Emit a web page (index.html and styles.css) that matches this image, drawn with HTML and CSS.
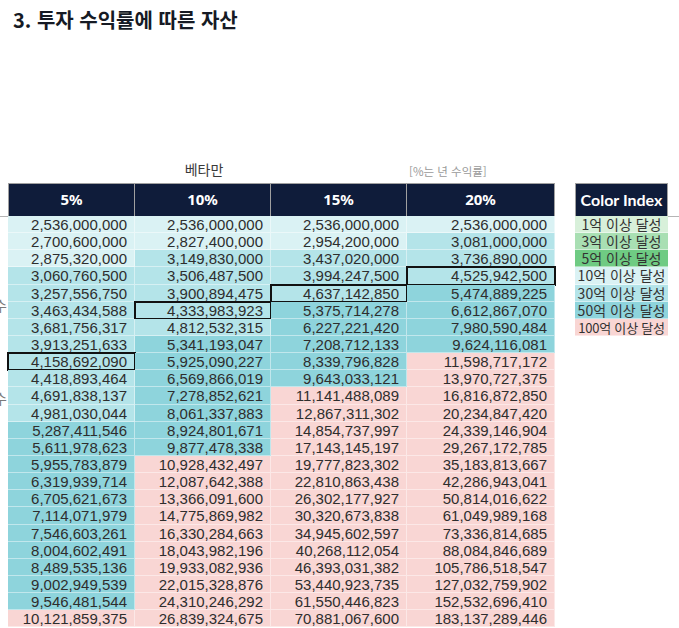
FILE: index.html
```html
<!DOCTYPE html>
<html lang="ko">
<head>
<meta charset="utf-8">
<title>투자 수익률에 따른 자산</title>
<link rel="stylesheet" href="styles.css">
</head>
<body>
<h1 class="title">3. 투자 수익률에 따른 자산</h1>

<div class="captions">
  <span></span>
  <span></span>
  <span class="cap-main">베타만</span>
  <span></span>
  <span class="cap-note">[%는 년 수익률]</span>
</div>

<div class="board">
  <div class="gutter">
    <span class="stub">수</span>
    <span class="stub stub-2">수</span>
  </div>

  <div class="grid">
    <div class="th">5%</div><div class="th">10%</div><div class="th">15%</div><div class="th">20%</div>

    <div class="td c1">2,536,000,000</div><div class="td c1">2,536,000,000</div><div class="td c1">2,536,000,000</div><div class="td c1">2,536,000,000</div>
    <div class="td c1">2,700,600,000</div><div class="td c1">2,827,400,000</div><div class="td c1">2,954,200,000</div><div class="td c2">3,081,000,000</div>
    <div class="td c1">2,875,320,000</div><div class="td c2">3,149,830,000</div><div class="td c2">3,437,020,000</div><div class="td c2">3,736,890,000</div>
    <div class="td c2">3,060,760,500</div><div class="td c2">3,506,487,500</div><div class="td c2">3,994,247,500</div><div class="td c2 hit">4,525,942,500</div>
    <div class="td c2">3,257,556,750</div><div class="td c2">3,900,894,475</div><div class="td c2 hit">4,637,142,850</div><div class="td c3">5,474,889,225</div>
    <div class="td c2">3,463,434,588</div><div class="td c2 hit">4,333,983,923</div><div class="td c3">5,375,714,278</div><div class="td c3">6,612,867,070</div>
    <div class="td c2">3,681,756,317</div><div class="td c2">4,812,532,315</div><div class="td c3">6,227,221,420</div><div class="td c3">7,980,590,484</div>
    <div class="td c2">3,913,251,633</div><div class="td c3">5,341,193,047</div><div class="td c3">7,208,712,133</div><div class="td c3">9,624,116,081</div>
    <div class="td c2 hit">4,158,692,090</div><div class="td c3">5,925,090,227</div><div class="td c3">8,339,796,828</div><div class="td c4">11,598,717,172</div>
    <div class="td c2">4,418,893,464</div><div class="td c3">6,569,866,019</div><div class="td c3">9,643,033,121</div><div class="td c4">13,970,727,375</div>
    <div class="td c2">4,691,838,137</div><div class="td c3">7,278,852,621</div><div class="td c4">11,141,488,089</div><div class="td c4">16,816,872,850</div>
    <div class="td c2">4,981,030,044</div><div class="td c3">8,061,337,883</div><div class="td c4">12,867,311,302</div><div class="td c4">20,234,847,420</div>
    <div class="td c3">5,287,411,546</div><div class="td c3">8,924,801,671</div><div class="td c4">14,854,737,997</div><div class="td c4">24,339,146,904</div>
    <div class="td c3">5,611,978,623</div><div class="td c3">9,877,478,338</div><div class="td c4">17,143,145,197</div><div class="td c4">29,267,172,785</div>
    <div class="td c3">5,955,783,879</div><div class="td c4">10,928,432,497</div><div class="td c4">19,777,823,302</div><div class="td c4">35,183,813,667</div>
    <div class="td c3">6,319,939,714</div><div class="td c4">12,087,642,388</div><div class="td c4">22,810,863,438</div><div class="td c4">42,286,943,041</div>
    <div class="td c3">6,705,621,673</div><div class="td c4">13,366,091,600</div><div class="td c4">26,302,177,927</div><div class="td c4">50,814,016,622</div>
    <div class="td c3">7,114,071,979</div><div class="td c4">14,775,869,982</div><div class="td c4">30,320,673,838</div><div class="td c4">61,049,989,168</div>
    <div class="td c3">7,546,603,261</div><div class="td c4">16,330,284,663</div><div class="td c4">34,945,602,597</div><div class="td c4">73,336,814,685</div>
    <div class="td c3">8,004,602,491</div><div class="td c4">18,043,982,196</div><div class="td c4">40,268,112,054</div><div class="td c4">88,084,846,689</div>
    <div class="td c3">8,489,535,136</div><div class="td c4">19,933,082,936</div><div class="td c4">46,393,031,382</div><div class="td c4">105,786,518,547</div>
    <div class="td c3">9,002,949,539</div><div class="td c4">22,015,328,876</div><div class="td c4">53,440,923,735</div><div class="td c4">127,032,759,902</div>
    <div class="td c3">9,546,481,544</div><div class="td c4">24,310,246,292</div><div class="td c4">61,550,446,823</div><div class="td c4">152,532,696,410</div>
    <div class="td c4">10,121,859,375</div><div class="td c4">26,839,324,675</div><div class="td c4">70,881,067,600</div><div class="td c4">183,137,289,446</div>
  </div>

  <div class="legend">
    <div class="lh">Color Index</div>
    <div class="li g1">1억 이상 달성</div>
    <div class="li g2">3억 이상 달성</div>
    <div class="li g3">5억 이상 달성</div>
    <div class="li c1">10억 이상 달성</div>
    <div class="li c2">30억 이상 달성</div>
    <div class="li c3">50억 이상 달성</div>
    <div class="li c4 tight">100억 이상 달성</div>
  </div>

  <div class="tail"></div>
</div>
</body>
</html>
```

FILE: styles.css
```css
* { box-sizing: border-box; }

html, body {
  margin: 0;
  padding: 0;
  background: #ffffff;
}

body {
  width: 679px;
  height: 628px;
  overflow: hidden;
  font-family: "Noto Sans CJK KR", "Noto Sans", sans-serif;
  color: #333333;
}

.title {
  margin: 0 0 129px;
  padding: 8px 13px 0;
  font-size: 20px;
  line-height: 24px;
  font-weight: 700;
  color: #161a24;
}

.captions {
  display: grid;
  grid-template-columns: 8px 127px 136px 136px 148px;
  height: 20px;
  margin-bottom: 2px;
  line-height: 20px;
}

.cap-main {
  text-align: center;
  font-size: 14px;
  color: #3a3a3a;
  padding-left: 2px;
  margin-top: -2px;
}

.cap-note {
  padding-left: 2px;
  font-size: 11.5px;
  color: #9a9a9a;
}

.board {
  display: flex;
  align-items: flex-start;
}

.gutter {
  width: 8px;
  height: 300px;
  overflow: hidden;
  padding-top: 115px;
  background: linear-gradient(#b5b5b5, #b5b5b5) no-repeat 0 33px / 100% 1px;
}

.stub {
  display: block;
  margin-left: -6px;
  font-size: 14px;
  line-height: 14px;
  color: #7a7a7a;
  white-space: nowrap;
}

.stub-2 {
  margin-top: 79px;
}

.grid {
  display: grid;
  grid-template-columns: 127px 136px 136px 148px;
  grid-template-rows: 33px;
  grid-auto-rows: 17.15px;
}

.th {
  background: #0f1c3a;
  color: #ffffff;
  font-family: "Noto Sans", "Noto Sans CJK KR", sans-serif;
  font-weight: 700;
  font-size: 15px;
  line-height: 31px;
  text-align: center;
  border-top: 1px solid #a0a0a0;
  border-right: 1px solid #a0a0a0;
}

.th:first-child {
  border-left: 1px solid #a0a0a0;
}

.td {
  font-family: "Liberation Sans", Arial, sans-serif;
  font-size: 15px;
  line-height: 17px;
  text-align: right;
  padding-right: 7px;
  color: #2e2e2e;
  border-right: 1px solid rgba(255, 255, 255, 0.45);
  border-bottom: 1px solid rgba(255, 255, 255, 0.45);
  white-space: nowrap;
}

.c1 { background: #daf2f4; }
.c2 { background: #b4e4e9; }
.c3 { background: #8ed4dc; }
.c4 { background: #f9d6d4; }
.g1 { background: #d8f0da; }
.g2 { background: #a9dfb3; }
.g3 { background: #6fcb83; }

.hit {
  outline: 2px solid #111111;
  outline-offset: -1px;
}

.legend {
  margin-left: 20px;
  width: 93px;
  display: grid;
  grid-template-rows: 33px;
  grid-auto-rows: 17.15px;
}

.lh {
  background: #0f1c3a;
  color: #ffffff;
  font-family: "Lato", "Noto Sans", sans-serif;
  font-weight: 700;
  font-size: 16px;
  line-height: 31px;
  text-align: center;
  border: 1px solid #a0a0a0;
  border-bottom: 0;
  white-space: nowrap;
}

.li {
  font-size: 14px;
  line-height: 17px;
  text-align: center;
  color: #333333;
  white-space: nowrap;
  border-bottom: 1px solid rgba(255, 255, 255, 0.45);
}

.tight {
  font-size: 13px;
  letter-spacing: -0.2px;
}

.tail {
  flex: 1;
  height: 40px;
  background: linear-gradient(#b5b5b5, #b5b5b5) no-repeat 0 33px / 100% 1px;
}
```
